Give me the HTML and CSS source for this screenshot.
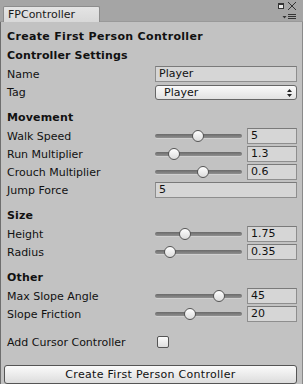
FILE: index.html
```html
<!DOCTYPE html>
<html>
<head>
<meta charset="utf-8">
<link rel="stylesheet" href="styles.css">
</head>
<body>
<div class="window">
  <div class="titlebar">
    <div class="tab">FPController</div>
    <div class="controls">
      <div class="ctl-top">
        <svg class="ico" width="20" height="10" viewBox="0 0 20 10">
          <rect x="1.5" y="2.5" width="5" height="5" fill="#e8e8e8" stroke="#333" stroke-width="1"/>
          <rect x="1" y="2" width="6" height="2" fill="#333"/>
          <path d="M11 1 L19 9 M19 1 L11 9" stroke="#333" stroke-width="1"/>
        </svg>
      </div>
      <div class="ctl-bottom">
        <svg class="ico" width="15" height="7" viewBox="0 0 15 7">
          <path d="M0.5 3 L4.5 3 L2.5 5.5 Z" fill="#333"/>
          <rect x="6" y="1" width="8" height="1" fill="#333"/>
          <rect x="6" y="3" width="8" height="1" fill="#333"/>
          <rect x="6" y="5" width="8" height="1" fill="#333"/>
        </svg>
      </div>
    </div>
  </div>
  <div class="content">
    <div class="title">Create First Person Controller</div>
    <div class="heading">Controller Settings</div>
    <div class="row"><span class="label">Name</span><div class="field">Player</div></div>
    <div class="row"><span class="label">Tag</span>
      <div class="popup">Player
        <svg class="arrows" width="5" height="8" viewBox="0 0 5 8"><path d="M2.5 0 L5 3 L0 3 Z M2.5 8 L5 5 L0 5 Z" fill="#222"/></svg>
      </div>
    </div>

    <div class="heading gap">Movement</div>
    <div class="row"><span class="label">Walk Speed</span>
      <div class="slider"><div class="track"><span class="thumb" style="left:43px"></span></div><div class="field num">5</div></div></div>
    <div class="row"><span class="label">Run Multiplier</span>
      <div class="slider"><div class="track"><span class="thumb" style="left:19px"></span></div><div class="field num">1.3</div></div></div>
    <div class="row"><span class="label">Crouch Multiplier</span>
      <div class="slider"><div class="track"><span class="thumb" style="left:48px"></span></div><div class="field num">0.6</div></div></div>
    <div class="row"><span class="label">Jump Force</span><div class="field">5</div></div>

    <div class="heading gap">Size</div>
    <div class="row"><span class="label">Height</span>
      <div class="slider"><div class="track"><span class="thumb" style="left:30px"></span></div><div class="field num">1.75</div></div></div>
    <div class="row"><span class="label">Radius</span>
      <div class="slider"><div class="track"><span class="thumb" style="left:15px"></span></div><div class="field num">0.35</div></div></div>

    <div class="heading gap">Other</div>
    <div class="row"><span class="label">Max Slope Angle</span>
      <div class="slider"><div class="track"><span class="thumb" style="left:64px"></span></div><div class="field num">45</div></div></div>
    <div class="row"><span class="label">Slope Friction</span>
      <div class="slider"><div class="track"><span class="thumb" style="left:35px"></span></div><div class="field num">20</div></div></div>

    <div class="row gap2"><span class="label">Add Cursor Controller</span><div class="check-wrap"><span class="check"></span></div></div>

    <div class="button">Create First Person Controller</div>
  </div>
</div>
</body>
</html>
```
FILE: styles.css
```css
html, body {
  margin: 0;
  padding: 0;
  background: #c2c2c2;
}
.window {
  width: 303px;
  height: 384px;
  box-sizing: border-box;
  display: flex;
  flex-direction: column;
  font-family: "DejaVu Sans", sans-serif;
  font-size: 11px;
  color: #111;
  overflow: hidden;
}
.titlebar {
  height: 22px;
  background: #a5a5a5;
  display: flex;
  align-items: flex-end;
  justify-content: space-between;
  border-bottom: 1px solid #999;
  box-sizing: border-box;
  padding-left: 3px;
}
.tab {
  height: 16px;
  width: 97px;
  box-sizing: border-box;
  background: linear-gradient(#e4e4e4, #d8d8d8);
  border: 1px solid #8c8c8c;
  border-bottom: none;
  border-radius: 2px 2px 0 0;
  padding-left: 4px;
  line-height: 15px;
  font-size: 11px;
  color: #1a1a1a;
  margin-bottom: -1px;
}
.controls {
  width: 26px;
  height: 22px;
  display: flex;
  flex-direction: column;
  align-items: flex-end;
  padding-right: 6px;
}
.ctl-top { height: 12px; padding-top: 2px; }
.ctl-bottom { height: 8px; }
.ico { display: block; }
.content {
  flex: 1;
  border-left: 1px solid #6e6e6e;
  border-right: 1px solid #8a8a8a;
  border-bottom: 1px solid #6e6e6e;
  padding: 5px 5px 0 6px;
  display: flex;
  flex-direction: column;
}
.title, .heading {
  font-weight: bold;
  height: 19px;
  line-height: 19px;
}
.title { letter-spacing: 0.33px; }
.heading { letter-spacing: 0.15px; }
.heading.gap { margin-top: 7px; }
.row {
  height: 18px;
  display: grid;
  grid-template-columns: 148px 1fr;
  align-items: center;
}
.row.gap2 { margin-top: 10px; }
.label { white-space: nowrap; }
.field {
  height: 16px;
  box-sizing: border-box;
  background: #d6d6d6;
  border: 1px solid #8e8e8e;
  border-top-color: #7a7a7a;
  padding-left: 3px;
  line-height: 14px;
  color: #111;
}
.popup {
  position: relative;
  height: 15px;
  box-sizing: border-box;
  background: linear-gradient(#fafafa, #e2e2e2);
  border: 1px solid #666;
  border-radius: 3px;
  padding-left: 8px;
  line-height: 13px;
}
.arrows {
  position: absolute;
  right: 4px;
  top: 3px;
}
.slider {
  display: flex;
  align-items: center;
  gap: 5px;
}
.track {
  position: relative;
  flex: 1;
  height: 4px;
  border-radius: 2px;
  background: linear-gradient(#6a6a6a, #909090);
  box-shadow: 0 1px 0 #d0d0d0;
}
.thumb {
  position: absolute;
  top: -4px;
  margin-left: -6px;
  width: 10px;
  height: 10px;
  border-radius: 50%;
  background: linear-gradient(#ffffff, #dcdcdc);
  border: 1px solid #555;
}
.field.num { width: 50px; }
.check-wrap { display: flex; align-items: center; padding-left: 2px; }
.check {
  width: 10px;
  height: 10px;
  border: 1px solid #555;
  border-radius: 2px;
  background: linear-gradient(#fbfbfb, #dedede);
}
.button {
  margin-top: 14px;
  margin-left: -3px;
  height: 19px;
  box-sizing: border-box;
  border: 1px solid #555;
  border-radius: 3px;
  background: linear-gradient(#fbfbfb, #dcdcdc);
  text-align: center;
  line-height: 17px;
  letter-spacing: 0.3px;
  color: #111;
}
```
